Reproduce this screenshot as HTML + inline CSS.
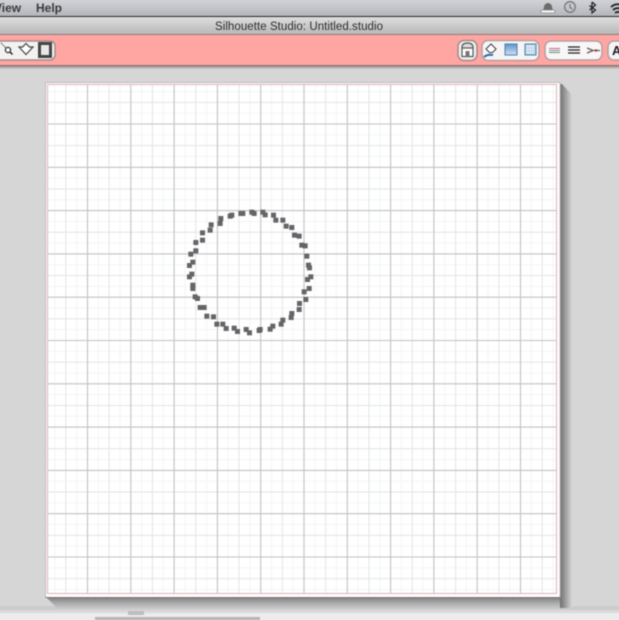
<!DOCTYPE html>
<html><head><meta charset="utf-8"><style>
html,body{margin:0;padding:0;width:619px;height:620px;overflow:hidden;background:#d6d6d6}
svg{display:block}
text{font-family:"Liberation Sans",sans-serif}
#all{filter:blur(.45px)}
</style></head><body>
<svg xmlns="http://www.w3.org/2000/svg" width="619" height="620" viewBox="0 0 619 620">
<defs>
<linearGradient id="menu" x1="0" y1="0" x2="0" y2="1"><stop offset="0" stop-color="#dcdce0"/><stop offset="1" stop-color="#b4b6bc"/></linearGradient>
<linearGradient id="title" x1="0" y1="0" x2="0" y2="1"><stop offset="0" stop-color="#dedede"/><stop offset="1" stop-color="#b6b6b6"/></linearGradient>
<linearGradient id="shb" x1="0" y1="0" x2="0" y2="1"><stop offset="0" stop-color="#858585"/><stop offset=".5" stop-color="#aaaaaa"/><stop offset="1" stop-color="#c8c8c8"/></linearGradient>
<linearGradient id="shr" x1="0" y1="0" x2="1" y2="0"><stop offset="0" stop-color="#707070"/><stop offset=".5" stop-color="#a2a2a2"/><stop offset="1" stop-color="#d6d6d6"/></linearGradient>
<linearGradient id="blue" x1="0" y1="0" x2="0" y2="1"><stop offset="0" stop-color="#5f95c8"/><stop offset="1" stop-color="#cfe2f4"/></linearGradient>
<path id="gMinor" d="M55.05 84V594M76.65 84V594M98.35 84V594M119.95 84V594M141.65 84V594M163.25 84V594M184.95 84V594M206.55 84V594M228.25 84V594M249.85 84V594M271.55 84V594M293.15 84V594M314.85 84V594M336.45 84V594M358.15 84V594M379.75 84V594M401.45 84V594M423.05 84V594M444.75 84V594M466.35 84V594M488.05 84V594M509.65 84V594M531.35 84V594M552.95 84V594" fill="none" stroke="#f3f5f5" stroke-width="1"/>
<path id="gMid" d="M65.85 84V594M109.15 84V594M152.45 84V594M195.75 84V594M239.05 84V594M282.35 84V594M325.65 84V594M368.95 84V594M412.25 84V594M455.55 84V594M498.85 84V594M542.15 84V594" fill="none" stroke="#e3e4e4" stroke-width="1"/>
<path id="gMajor" d="M87.5 84V594M130.8 84V594M174.1 84V594M217.4 84V594M260.7 84V594M304 84V594M347.3 84V594M390.6 84V594M433.9 84V594M477.2 84V594M520.5 84V594" fill="none" stroke="#c2c2c2" stroke-width="1.100"/>
</defs>

<g id="all">
<rect x="-6" y="-6" width="631" height="632" fill="#d6d6d6"/>

<!-- menu bar -->
<rect x="-6" y="-6" width="631" height="22" fill="url(#menu)"/>
<rect x="-6" y="16" width="631" height="1" fill="#2a2a2a"/>
<text x="-6" y="12" font-size="12" font-weight="bold" fill="#3a3a3a">View</text>
<text x="36" y="12" font-size="12" font-weight="bold" fill="#3a3a3a">Help</text>
<!-- status icons -->
<path d="M542 11c1-1 2-2 2-4 0-2 2-4 4-4s4 2 4 4c0 2 1 3 2 4z" fill="#6c6c6c"/><rect x="541" y="10" width="14" height="3" rx="1.500" fill="#f1f1f1" stroke="#777" stroke-width=".6"/>
<circle cx="570" cy="7" r="5.300" fill="none" stroke="#777" stroke-width="1.300"/><path d="M570 4v3.500l2.500 1.500" fill="none" stroke="#666" stroke-width="1"/>
<path d="M592 2v11l3.500-3-6-4.500M592 2l3.500 3-6 5" fill="none" stroke="#222" stroke-width="1.200"/>
<path d="M611 7c4-3.500 9-3.500 14 0M613 10c3-2.500 7-2.500 10 0M615 13c2-1.500 4-1.500 6 0" fill="none" stroke="#1d1d1d" stroke-width="1.700"/>

<!-- title bar -->
<rect x="-6" y="17" width="631" height="18" fill="url(#title)"/>
<text x="215" y="30" font-size="11.500" fill="#2e2e2e" textLength="168">Silhouette Studio: Untitled.studio</text>

<!-- pink toolbar -->
<rect x="-6" y="34" width="631" height="1.500" fill="#8f7c7a"/>
<rect x="-6" y="35" width="631" height="30" fill="#ffa6a2"/>
<rect x="-6" y="65" width="631" height="1.500" fill="#8b7372"/>
<rect x="-6" y="66.500" width="631" height="2" fill="#b5b0af"/>

<!-- left group -->
<rect x="-12" y="41" width="67" height="19" rx="5" fill="#f4f2f1" stroke="#a08c8b" stroke-width="1.500"/>
<path d="M1 43l9 9" stroke="#555" stroke-width="1.200" stroke-dasharray="1.500 1"/><circle cx="8" cy="50" r="2.600" fill="#fff" stroke="#333" stroke-width="1.300"/><path d="M10 52l2.500 2.500" stroke="#222" stroke-width="1.500"/>
<path d="M26 43.500l3.500 3.500h3.500l-7 7.500-7-7.500h3.500z" fill="#fff" stroke="#444" stroke-width="1.200"/>
<rect x="38" y="42" width="14" height="16" fill="#444"/><rect x="41" y="45" width="8" height="10" fill="#e8e8e8"/>

<!-- right groups -->
<rect x="458" y="40.500" width="19" height="20" rx="6" fill="#f0eeee" stroke="#a08c8b" stroke-width="1.500"/>
<path d="M462 47.500c0-3 2-4.500 5.500-4.500s5.500 1.500 5.500 4.500" fill="#ddd" stroke="#555" stroke-width="1.200"/><rect x="462" y="48" width="11" height="8.500" fill="#fff" stroke="#555" stroke-width="1.200"/><rect x="465.500" y="51" width="4" height="5.500" fill="#777"/>

<rect x="482" y="40.500" width="57" height="20" rx="6" fill="#f6f4f4" stroke="#b49e9d" stroke-width="1.500"/>
<path d="M486 49l5-5 5 5-3.500 3.500h-3z" fill="#fff" stroke="#444" stroke-width="1.100"/><path d="M484 57c3-2.500 6-2.500 9-2" stroke="#2d63b0" stroke-width="2" fill="none"/>
<rect x="505" y="44" width="12" height="11" fill="url(#blue)" stroke="#4b7fae" stroke-width="1"/>
<rect x="525" y="44" width="11" height="11" fill="#bcd6ea" stroke="#4b7fae" stroke-width="1"/>
<path d="M527 46.500h7M527 49.500h7M527 52.500h7" stroke="#fff" stroke-width="1.200" stroke-dasharray="1.500 1"/>

<rect x="545" y="41" width="57" height="19" rx="6" fill="#f8f6f6" stroke="#b49e9d" stroke-width="1.500"/>
<path d="M549 48.500h11" stroke="#d06a70"/><path d="M549 50.500h11" stroke="#7a8fd0"/><path d="M549 52.500h11" stroke="#6a9a4a"/>
<path d="M568 47h12M568 50h12M568 53h12" stroke="#222" stroke-width="1.200"/>
<path d="M587 48l6 2.500-6 2.500M593 50.500h7" fill="none" stroke="#6a5a5a" stroke-width="1.300"/><circle cx="596" cy="50.500" r="1.200" fill="#a33"/>

<rect x="608" y="41" width="24" height="19" rx="6" fill="#f6f4f4" stroke="#b49e9d" stroke-width="1.500"/>
<text x="612" y="55" font-size="13" font-weight="bold" fill="#222">A</text>

<!-- bottom -->
<rect x="-6" y="606" width="631" height="4" fill="#cbcbcb"/>
<rect x="-6" y="610" width="631" height="3" fill="#d9d9d9"/>
<rect x="-6" y="613" width="631" height="13" fill="#ececec"/>
<rect x="128" y="611" width="16" height="4" fill="#bdbdbd"/>
<rect x="95" y="617" width="165" height="3" fill="#b5b5b5"/>

<!-- page shadow -->
<path d="M560 84l2 0 10 11v513h-12z" fill="url(#shr)"/>
<path d="M47 598h513v10H57z" fill="url(#shb)"/>

<!-- page -->
<rect x="45.500" y="82.500" width="514.500" height="515" fill="#fff" stroke="#bdbdbd" stroke-width="1"/>
<use href="#gMinor"/>
<use href="#gMinor" transform="matrix(0 1 1 0 -37 36.500)"/>
<use href="#gMid"/>
<use href="#gMid" transform="matrix(0 1 1 0 -37 36.500)"/>
<use href="#gMajor"/>
<use href="#gMajor" transform="matrix(0 1 1 0 -37 36.500)"/>
<rect x="47.500" y="84.500" width="509" height="509" fill="none" stroke="#e6bcc0" stroke-width="1.200"/>
<rect x="45.500" y="597" width="515" height="1" fill="#777"/>

<!-- circle of dots -->
<g fill="#666468" stroke="#666468" stroke-width="2" transform="translate(180,200) scale(.33333)">
<rect x="41" y="121" width="13" height="13"/><rect x="61" y="114" width="13" height="13"/><rect x="61" y="92" width="13" height="13"/><rect x="84" y="84" width="13" height="13"/><rect x="87" y="68" width="13" height="13"/><rect x="114" y="64" width="13" height="13"/><rect x="116" y="49" width="13" height="13"/><rect x="144" y="42" width="13" height="13"/><rect x="149" y="39" width="13" height="13"/><rect x="176" y="34" width="13" height="13"/><rect x="182" y="34" width="13" height="13"/><rect x="209" y="30" width="13" height="13"/><rect x="216" y="34" width="13" height="13"/><rect x="242" y="30" width="13" height="13"/><rect x="249" y="38" width="13" height="13"/><rect x="274" y="39" width="13" height="13"/><rect x="281" y="54" width="13" height="13"/><rect x="302" y="54" width="13" height="13"/><rect x="312" y="72" width="13" height="13"/><rect x="329" y="76" width="13" height="13"/><rect x="337" y="99" width="13" height="13"/><rect x="351" y="102" width="13" height="13"/><rect x="359" y="129" width="13" height="13"/><rect x="369" y="131" width="13" height="13"/><rect x="374" y="162" width="13" height="13"/><rect x="379" y="189" width="13" height="13"/><rect x="382" y="197" width="13" height="13"/><rect x="376" y="232" width="13" height="13"/><rect x="386" y="224" width="13" height="13"/><rect x="381" y="259" width="13" height="13"/><rect x="366" y="269" width="13" height="13"/><rect x="371" y="292" width="13" height="13"/><rect x="352" y="304" width="13" height="13"/><rect x="351" y="322" width="13" height="13"/><rect x="329" y="334" width="13" height="13"/><rect x="327" y="346" width="13" height="13"/><rect x="302" y="354" width="13" height="13"/><rect x="297" y="366" width="13" height="13"/><rect x="272" y="372" width="13" height="13"/><rect x="264" y="381" width="13" height="13"/><rect x="234" y="382" width="13" height="13"/><rect x="231" y="385" width="13" height="13"/><rect x="202" y="392" width="13" height="13"/><rect x="192" y="382" width="13" height="13"/><rect x="166" y="388" width="13" height="13"/><rect x="156" y="378" width="13" height="13"/><rect x="132" y="379" width="13" height="13"/><rect x="122" y="366" width="13" height="13"/><rect x="104" y="366" width="13" height="13"/><rect x="94" y="344" width="13" height="13"/><rect x="74" y="342" width="13" height="13"/><rect x="66" y="316" width="13" height="13"/><rect x="54" y="316" width="13" height="13"/><rect x="46" y="289" width="13" height="13"/><rect x="39" y="284" width="13" height="13"/><rect x="32" y="259" width="13" height="13"/><rect x="32" y="249" width="13" height="13"/><rect x="29" y="216" width="13" height="13"/><rect x="22" y="224" width="13" height="13"/><rect x="32" y="180" width="13" height="13"/><rect x="22" y="190" width="13" height="13"/><rect x="41" y="146" width="13" height="13"/><rect x="26" y="156" width="13" height="13"/>
</g>
</g>
</svg>
</body></html>
